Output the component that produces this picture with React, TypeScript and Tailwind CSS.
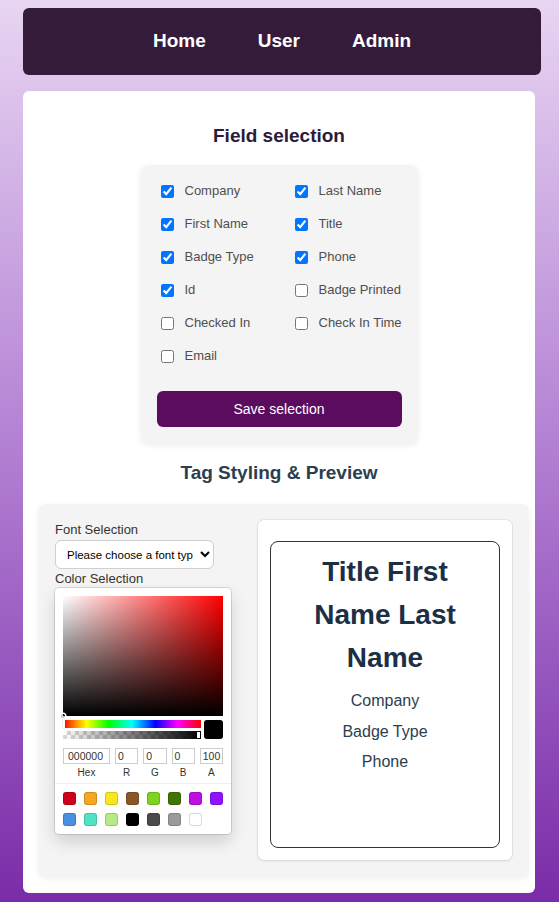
import React from "react";

const fields: { label: string; checked: boolean }[] = [
  { label: "Company", checked: true },
  { label: "Last Name", checked: true },
  { label: "First Name", checked: true },
  { label: "Title", checked: true },
  { label: "Badge Type", checked: true },
  { label: "Phone", checked: true },
  { label: "Id", checked: true },
  { label: "Badge Printed", checked: false },
  { label: "Checked In", checked: false },
  { label: "Check In Time", checked: false },
  { label: "Email", checked: false },
];

const swatches = [
  "#D0021B",
  "#F5A623",
  "#F8E71C",
  "#8B572A",
  "#7ED321",
  "#417505",
  "#BD10E0",
  "#9013FE",
  "#4A90E2",
  "#50E3C2",
  "#B8E986",
  "#000000",
  "#4A4A4A",
  "#9B9B9B",
  "#FFFFFF",
];

function ColorPicker() {
  const inputs = [
    { v: "000000", l: "Hex", hex: true },
    { v: "0", l: "R" },
    { v: "0", l: "G" },
    { v: "0", l: "B" },
    { v: "100", l: "A" },
  ];
  return (
    <div className="w-[176px] bg-white rounded-[4px] px-2 pt-2 pb-2 shadow-[0_0_0_1px_rgba(0,0,0,0.12),0_8px_16px_rgba(0,0,0,0.15)]">
      <div className="relative h-[120px] w-full bg-[#ff0000]">
        <div className="absolute inset-0 bg-[linear-gradient(to_right,#ffffff,rgba(255,255,255,0))]" />
        <div className="absolute inset-0 bg-[linear-gradient(to_top,#000000,rgba(0,0,0,0))]" />
        <div className="absolute -left-[2px] -bottom-[2px] w-[4px] h-[4px] rounded-full shadow-[0_0_0_1.5px_#fff,inset_0_0_1px_1px_rgba(0,0,0,0.3)]" />
      </div>
      <div className="flex mt-[4px] gap-[3px]">
        <div className="flex-1 flex flex-col gap-[3px]">
          <div className="relative h-[8px] bg-[linear-gradient(to_right,#f00_0%,#ff0_17%,#0f0_33%,#0ff_50%,#00f_67%,#f0f_83%,#f00_100%)]">
            <div className="absolute left-0 top-0 w-[2px] h-[8px] bg-white shadow-[0_0_1px_rgba(0,0,0,0.6)]" />
          </div>
          <div className="relative h-[8px] bg-[repeating-conic-gradient(#d8d8d8_0%_25%,#ffffff_0%_50%)] bg-[length:8px_8px]">
            <div className="absolute inset-0 bg-[linear-gradient(to_right,rgba(0,0,0,0),#000)]" />
            <div className="absolute right-[1px] top-[1px] w-[3px] h-[6px] bg-white shadow-[0_0_1px_rgba(0,0,0,0.6)]" />
          </div>
        </div>
        <div className="w-[19px] h-[19px] rounded-[3px] bg-black shadow-[inset_0_0_0_1px_rgba(0,0,0,0.15)]" />
      </div>
      <div className="flex gap-[5px] mt-[9px]">
        {inputs.map((i) => (
          <div key={i.l} className={i.hex ? "w-[47px]" : "flex-1"}>
            <div
              className={
                i.hex
                  ? "h-[16px] w-full shadow-[inset_0_0_0_1px_#cccccc] text-[10.5px] leading-[16px] text-[#333] pl-[5px] overflow-hidden whitespace-nowrap"
                  : "h-[16px] w-full shadow-[inset_0_0_0_1px_#cccccc] text-[10.5px] leading-[16px] text-[#333] pl-[3px] overflow-hidden whitespace-nowrap"
              }
            >
              {i.v}
            </div>
            <div className="text-[10px] leading-[12px] text-[#333] text-center mt-[3px]">{i.l}</div>
          </div>
        ))}
      </div>
      <div className="-mx-2 mt-[4px] border-t border-[#eeeeee]" />
      <div className="grid grid-cols-[repeat(8,13px)] gap-x-[8px] gap-y-[8px] pt-[8px]">
        {swatches.map((c) => (
          <div
            key={c}
            className="w-[13px] h-[13px] rounded-[3px] shadow-[inset_0_0_0_1px_rgba(0,0,0,0.15)]"
            style={{ backgroundColor: c }}
          />
        ))}
      </div>
    </div>
  );
}

export default function App() {
  return (
    <div className="min-h-[902px] w-full bg-[linear-gradient(180deg,#e8d5f2_0%,#b27fd3_50%,#7a2ca8_100%)] pt-2 pb-[9px] font-['Liberation_Sans',Arial,sans-serif]">
      <nav className="ml-[23px] w-[518px] h-[67px] rounded-md bg-[#351b3a] flex items-center justify-center gap-[52px] text-white font-bold text-[19px]">
        <span>Home</span>
        <span>User</span>
        <span>Admin</span>
      </nav>
      <main className="ml-[23px] mt-4 w-[512px] h-[802px] bg-white rounded-md pt-[34px]">
        <h2 className="text-center text-[19px] leading-[22px] font-bold text-[#2b1a3a]">Field selection</h2>
        <div className="mx-auto mt-[18px] w-[277px] bg-[#f4f4f4] rounded-lg px-4 pt-4 pb-4 shadow-[0_2px_6px_rgba(0,0,0,0.08)]">
          <div className="grid grid-cols-[134px_110px] gap-y-[13px]">
            {fields.map((f) => (
              <label key={f.label} className="flex items-center h-[20px] text-[13px] text-[#4f4f4f] whitespace-nowrap">
                <input type="checkbox" defaultChecked={f.checked} className="ml-[4px] mr-[11px] w-[13px] h-[13px]" />
                {f.label}
              </label>
            ))}
          </div>
          <button className="mt-[25px] w-full h-[36px] rounded-md bg-[#5b0c5f] text-white text-[14px]">Save selection</button>
        </div>
        <h2 className="mt-[19px] text-center text-[19px] leading-[22px] font-bold text-[#2c3e50]">Tag Styling &amp; Preview</h2>
        <div className="ml-[15px] mt-[20px] w-[491px] bg-[#f4f4f4] rounded-lg px-[17px] pt-4 pb-[17px] flex shadow-[0_2px_6px_rgba(0,0,0,0.06)]">
          <div className="w-[203px]">
            <div className="text-[13px] leading-[18px] text-[#333] pt-[1px]">Font Selection</div>
            <select className="mt-[1px] w-[159px] h-[29px] rounded-md border border-[#cfcfcf] bg-white text-[11.5px] text-black pl-[7px] pr-[4px]">
              <option>Please choose a font type</option>
            </select>
            <div className="text-[13px] leading-[18px] text-[#333] mt-[1px]">Color Selection</div>
            <ColorPicker />
          </div>
          <div className="w-[254px] h-[340px] bg-white rounded-md pt-[21px] px-3 pb-3 shadow-[0_0_0_1px_rgba(0,0,0,0.05),0_1px_3px_rgba(0,0,0,0.08)]">
            <div className="h-[307px] border border-[#333] rounded-lg px-5 pt-[8px] text-center">
              <div className="text-[28px] leading-[43px] font-bold text-[#1c2f45]">Title First Name Last Name</div>
              <div className="mt-[7px] text-[16px] leading-[30.5px] text-[#2c3e50]">
                <div>Company</div>
                <div>Badge Type</div>
                <div>Phone</div>
              </div>
            </div>
          </div>
        </div>
      </main>
    </div>
  );
}
